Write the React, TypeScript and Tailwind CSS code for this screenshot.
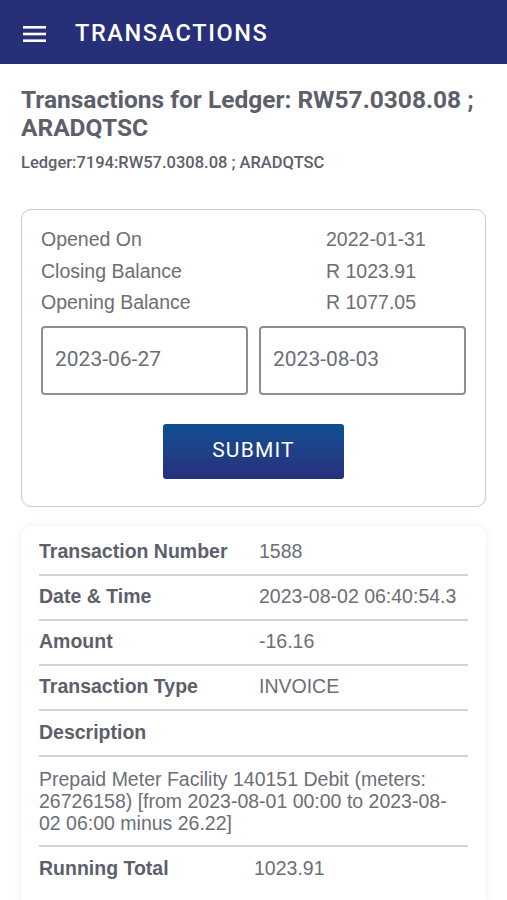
import React from "react";

const rows: { label: string; value: string }[] = [
  { label: "Transaction Number", value: "1588" },
  { label: "Date & Time", value: "2023-08-02 06:40:54.3" },
  { label: "Amount", value: "-16.16" },
  { label: "Transaction Type", value: "INVOICE" },
];

export default function App() {
  return (
    <div className="w-[507px] h-[900px] overflow-hidden bg-white" style={{ fontFamily: "Roboto, sans-serif" }}>
      <header className="h-16 bg-[#262f78] flex items-center">
        <svg width="24" height="16" viewBox="0 0 24 16" className="ml-[23px] mt-[3px]">
          <rect x="0" y="0" width="23" height="2.6" fill="#fff" />
          <rect x="0" y="6.7" width="23" height="2.6" fill="#fff" />
          <rect x="0" y="13.4" width="23" height="2.6" fill="#fff" />
        </svg>
        <h1 className="ml-[28px] mt-[4px] text-white text-[23.5px] font-medium tracking-[1.6px]">TRANSACTIONS</h1>
      </header>
      <div className="px-[21px]">
        <h2 className="mt-[22px] text-[24.5px] leading-[28px] font-bold text-[#5d5f6b]">
          Transactions for Ledger: RW57.0308.08 ; ARADQTSC
        </h2>
        <p className="mt-[11px] text-[16.5px] leading-[20px] font-medium text-[#5d5f6b]">Ledger:7194:RW57.0308.08 ; ARADQTSC</p>

        <div
          className="mt-[36px] border border-[#c9c9c9] rounded-[10px] px-[19px] pt-[14px] pb-[27px] text-[#6c6e78] text-[19.5px]"
          style={{ fontFamily: '"Liberation Sans", Arial, sans-serif' }}
        >
          <div className="grid grid-cols-[285px_1fr] leading-[31.5px]">
            <span>Opened On</span>
            <span>2022-01-31</span>
            <span>Closing Balance</span>
            <span>R 1023.91</span>
            <span>Opening Balance</span>
            <span>R 1077.05</span>
          </div>
          <div className="mt-[7px] grid grid-cols-2 gap-[11px]">
            <div className="h-[69px] border-2 border-[#8e8f95] rounded-[4px] flex items-center pl-[12px] text-[21px]" style={{ fontFamily: "Roboto, sans-serif" }}>2023-06-27</div>
            <div className="h-[69px] border-2 border-[#8e8f95] rounded-[4px] flex items-center pl-[12px] text-[21px]" style={{ fontFamily: "Roboto, sans-serif" }}>2023-08-03</div>
          </div>
          <div className="mt-[29px] flex justify-center">
            <button
              className="w-[181px] h-[55px] rounded-[3px] bg-gradient-to-b from-[#0c4f92] to-[#26307c] text-white text-[21px] tracking-[1.2px]"
              style={{ fontFamily: "Roboto, sans-serif" }}
            >
              SUBMIT
            </button>
          </div>
        </div>

        <div
          className="mt-[19px] rounded-[12px] shadow-[0_0_10px_rgba(0,0,0,0.08)] px-[18px] pb-[20px] text-[19.5px] text-[#6c6e78]"
          style={{ fontFamily: '"Liberation Sans", Arial, sans-serif' }}
        >
          {rows.map((r, i) => (
            <div key={r.label} className={`flex items-center border-b-2 border-[#d4d4d6] ${i === 0 ? "h-[50px] pt-[4px]" : "h-[45px]"}`}>
              <span className="w-[220px] font-bold text-[#5d5f6b]">{r.label}</span>
              <span>{r.value}</span>
            </div>
          ))}
          <div className="flex items-center h-[46px] border-b-2 border-[#d4d4d6]">
            <span className="font-bold text-[#5d5f6b]">Description</span>
          </div>
          <div className="py-[11px] leading-[22px] border-b-2 border-[#d4d4d6]">
            Prepaid Meter Facility 140151 Debit (meters: 26726158) [from 2023-08-01 00:00 to 2023-08-02 06:00 minus 26.22]
          </div>
          <div className="flex items-center h-[44px]">
            <span className="w-[215px] font-bold text-[#5d5f6b]">Running Total</span>
            <span>1023.91</span>
          </div>
        </div>
      </div>
    </div>
  );
}
